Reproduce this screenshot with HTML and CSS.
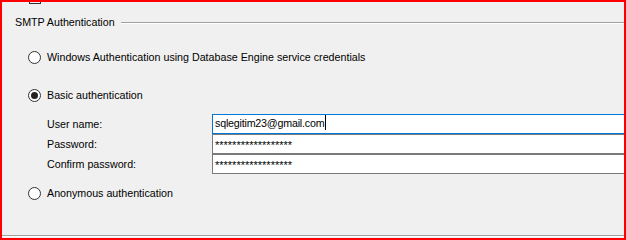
FILE: index.html
```html
<!DOCTYPE html>
<html>
<head>
<meta charset="utf-8">
<title>SMTP Authentication</title>
<link rel="stylesheet" href="styles.css">
</head>
<body>

<div id="frame">
    <div class="prev-check"></div>

    <div class="group-head">
        <span class="group-title">SMTP Authentication</span>
        <span class="group-line"></span>
    </div>

    <div class="opt" id="opt-win">
        <span class="radio"></span>
        <label>Windows Authentication using Database Engine service credentials</label>
    </div>

    <div class="opt" id="opt-basic">
        <span class="radio on"></span>
        <label>Basic authentication</label>
    </div>

    <div id="fields">
        <label>User name:</label>
        <div class="field focus">sqlegitim23@gmail.com<span class="caret"></span></div>
        <label>Password:</label>
        <div class="field secret">******************</div>
        <label>Confirm password:</label>
        <div class="field secret">******************</div>
    </div>

    <div class="opt" id="opt-anon">
        <span class="radio"></span>
        <label>Anonymous authentication</label>
    </div>

    <div class="bottom-line"></div>
</div>

</body>
</html>
```

FILE: styles.css
```css
html, body { margin: 0; padding: 0; background-color: #F0F0F0; font: normal 10.7px/15px 'Liberation Sans', Arial, sans-serif; color: #000; }

#frame { width: 626px; height: 240px; box-sizing: border-box; border: 2px solid #F00; background-color: #F0F0F0; overflow: hidden; display: flex; flex-direction: column; }

/* bottom edge of a checkbox above the group */
.prev-check { width: 10px; height: 1px; margin-left: 27px; border: 1px solid #333; border-top: none; }

.group-head  { display: flex; align-items: center; height: 15px; margin: 11px 0 0 13px; }
.group-title { margin-right: 6px; white-space: nowrap; }
.group-line  { flex: 1; height: 0; border-top: 1px solid #A0A0A0; border-bottom: 1px solid #FFF; }

.opt { display: flex; align-items: center; height: 15px; padding-left: 26px; white-space: nowrap; }
#opt-win   { margin-top: 20px; }
#opt-basic { margin-top: 23px; }
#opt-anon  { margin-top: 12px; }

.radio { width: 11px; height: 11px; margin-right: 6px; border: 1px solid #333; border-radius: 50%; background-color: #FFF; display: flex; align-items: center; justify-content: center; }
.radio.on::after { content: ''; width: 7px; height: 7px; border-radius: 50%; background-color: #222; }

#fields { display: grid; grid-template-columns: 165px 1fr; margin: 11px -20px 0 45px; }
#fields label { display: flex; align-items: center; height: 20px; }

.field { height: 18px; line-height: 17px; padding-left: 2px; border: 1px solid #7A7A7A; background-color: #FFF; white-space: nowrap; letter-spacing: -0.2px; }
.field.focus { border-color: #0078D7; }
.field.secret { line-height: 20px; font-size: 11px; letter-spacing: 0; }
.caret { display: inline-block; width: 1px; height: 15px; margin-left: 1px; vertical-align: -3px; background-color: #000; }

.bottom-line { margin-top: auto; margin-bottom: 1px; height: 0; border-top: 1px solid #A0A0A0; border-bottom: 1px solid #FFF; }
```
